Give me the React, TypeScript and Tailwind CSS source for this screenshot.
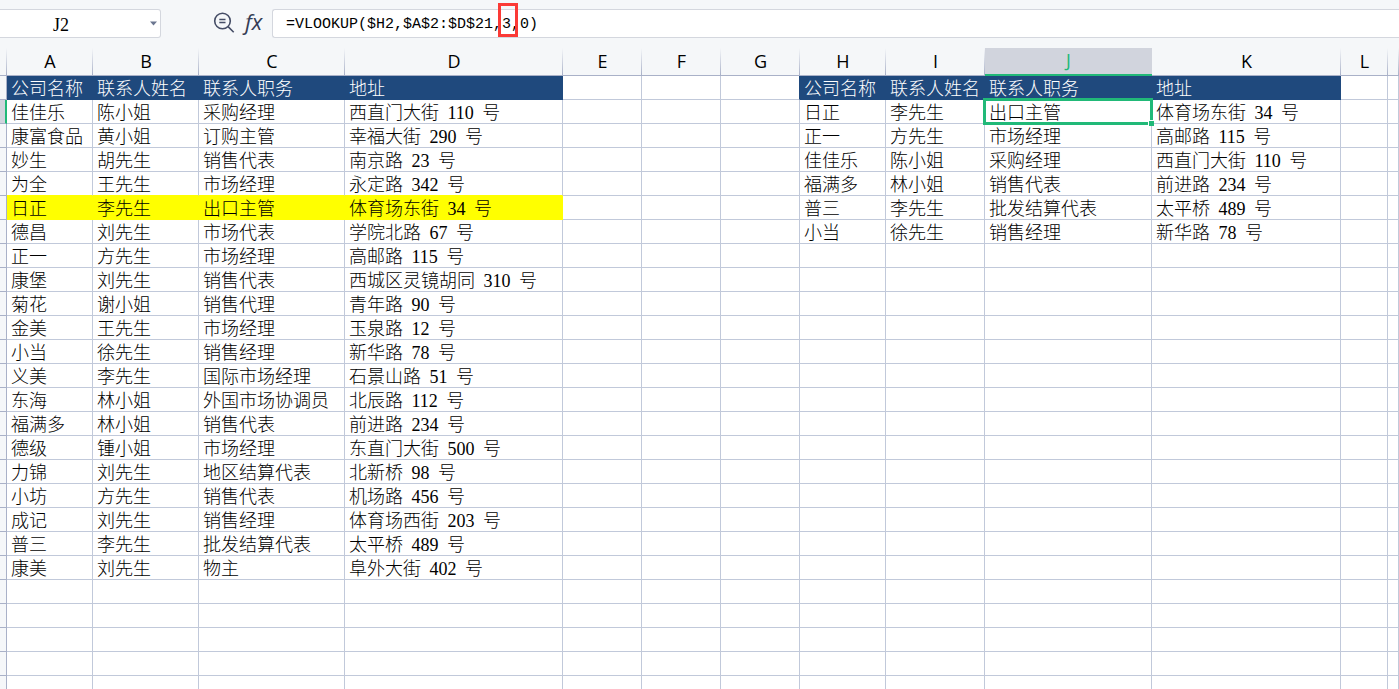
import { useState } from "react"

type Column = {
    name: string
    width: string
}

const columns: Column[] = [
    { name: "A", width: "w-[86px]" },
    { name: "B", width: "w-[106px]" },
    { name: "C", width: "w-[146px]" },
    { name: "D", width: "w-[218px]" },
    { name: "E", width: "w-[79px]" },
    { name: "F", width: "w-[79px]" },
    { name: "G", width: "w-[79px]" },
    { name: "H", width: "w-[86px]" },
    { name: "I", width: "w-[99px]" },
    { name: "J", width: "w-[167px]" },
    { name: "K", width: "w-[189px]" },
    { name: "L", width: "w-[47px]" },
    { name: "", width: "" },
]

const titles = ["公司名称", "联系人姓名", "联系人职务", "地址"]

const contacts = [
    ["佳佳乐", "陈小姐", "采购经理", "西直门大街 110 号"],
    ["康富食品", "黄小姐", "订购主管", "幸福大街 290 号"],
    ["妙生", "胡先生", "销售代表", "南京路 23 号"],
    ["为全", "王先生", "市场经理", "永定路 342 号"],
    ["日正", "李先生", "出口主管", "体育场东街 34 号"],
    ["德昌", "刘先生", "市场代表", "学院北路 67 号"],
    ["正一", "方先生", "市场经理", "高邮路 115 号"],
    ["康堡", "刘先生", "销售代表", "西城区灵镜胡同 310 号"],
    ["菊花", "谢小姐", "销售代理", "青年路 90 号"],
    ["金美", "王先生", "市场经理", "玉泉路 12 号"],
    ["小当", "徐先生", "销售经理", "新华路 78 号"],
    ["义美", "李先生", "国际市场经理", "石景山路 51 号"],
    ["东海", "林小姐", "外国市场协调员", "北辰路 112 号"],
    ["福满多", "林小姐", "销售代表", "前进路 234 号"],
    ["德级", "锺小姐", "市场经理", "东直门大街 500 号"],
    ["力锦", "刘先生", "地区结算代表", "北新桥 98 号"],
    ["小坊", "方先生", "销售代表", "机场路 456 号"],
    ["成记", "刘先生", "销售经理", "体育场西街 203 号"],
    ["普三", "李先生", "批发结算代表", "太平桥 489 号"],
    ["康美", "刘先生", "物主", "阜外大街 402 号"],
]

const lookups = ["日正", "正一", "佳佳乐", "福满多", "普三", "小当"]

const ROWS = 26
const HIGHLIGHT_ROW = 6

const getValue = (row: number, col: number) => {
    if (col < 4) {
        return row === 1 ? titles[col] : contacts[row - 2]?.[col] ?? ""
    }
    if (col >= 7 && col <= 10) {
        if (row === 1) return titles[col - 7]
        const found = contacts.find((c) => c[0] === lookups[row - 2])
        return found ? found[col - 7] : ""
    }
    return ""
}

const isTitle = (row: number, col: number) => row === 1 && (col < 4 || (col >= 7 && col <= 10))
const isYellow = (row: number, col: number) => row === HIGHLIGHT_ROW && col < 4

const getCellStyle = (row: number, col: number) => {
    if (isTitle(row, col)) return "bg-[#1f497d] border-[#1f497d] text-white"
    if (isYellow(row, col)) return "bg-[#ffff00] border-[#ffff00]"
    // the fill of a cell also covers the grid line before it
    const right = isTitle(row, col + 1) ? "border-r-[#1f497d]" : "border-r-[#c1c9da]"
    const bottom = isYellow(row + 1, col) ? "border-b-[#ffff00]" : "border-b-[#c1c9da]"
    return `bg-white ${right} ${bottom}`
}

// house numbers get some extra room on both sides
function CellText({ value }: { value: string }) {
    return (
        <>
            {value.split(/(\d+)/).map((part, i) =>
                /\d/.test(part) ? <span key={i} className="mx-1 font-normal">{part}</span> : part
            )}
        </>
    )
}

function FormulaBar() {
    const [cell, setCell] = useState("J2")
    const [formula, setFormula] = useState("=VLOOKUP($H2,$A$2:$D$21,3,0)")

    return (
        <div className="flex h-12 shrink-0 items-start pt-[9px]">
            <div className="flex h-[29px] w-[161px] items-center rounded-r-[3px] border border-l-0 border-[#d4d7de] bg-white">
                <input
                    aria-label="名称框"
                    value={cell}
                    onChange={(e) => setCell(e.target.value)}
                    className="w-[122px] pt-0.5 text-center font-['Liberation_Serif',serif] text-[18px] leading-6 text-black outline-none"
                />
                <button type="button" aria-label="展开名称" className="ml-auto flex h-full w-3 items-center">
                    <svg width="8" height="5" viewBox="0 0 8 5" className="ml-0.5 fill-[#6b7690]">
                        <path d="M0 0.5h7L3.5 4.5z" />
                    </svg>
                </button>
            </div>
            <div className="ml-[52px] flex w-[59px]">
                <button type="button" aria-label="查找" className="flex h-7 w-6 items-center">
                    <svg width="24" height="24" viewBox="0 0 24 24" fill="none" stroke="#454d66" strokeWidth="1.6">
                        <circle cx="9.5" cy="10" r="7.8" />
                        <path d="M15.1 15.6l5.6 5.6M6.3 8.5h6.2M6.3 11.5h6.2" />
                    </svg>
                </button>
                <button type="button" aria-label="插入函数" className="ml-2 h-6 font-['Open_Sans',sans-serif] text-[22px] leading-6 font-normal text-[#343c55] italic">fx</button>
            </div>
            <div className="relative flex h-[29px] flex-1 items-center rounded-l-[3px] border border-r-0 border-[#d4d7de] bg-white">
                <input
                    aria-label="编辑栏"
                    value={formula}
                    onChange={(e) => setFormula(e.target.value)}
                    className="w-full pt-0.5 pl-[13px] font-['Liberation_Mono',monospace] text-[15px] leading-6 text-black outline-none"
                />
                <span className="pointer-events-none absolute -top-[7px] left-[225px] h-[34px] w-5 border-3 border-[#fb3a36]"></span>
            </div>
        </div>
    )
}

export default function App() {
    return (
        <main className="flex h-screen flex-col overflow-hidden bg-[#f5f7f9] text-black">
            <FormulaBar />
            <div className="flex-1 overflow-hidden">
                <table className="w-full table-fixed border-separate border-spacing-0">
                    <colgroup>
                        <col className="w-[7px]" />
                        {columns.map((c, i) => (
                            <col key={i} className={c.width} />
                        ))}
                    </colgroup>
                    <thead>
                        <tr className="h-7">
                            <th aria-label="全选" className="border-b border-[#a9b1c8] bg-[linear-gradient(to_bottom,#f5f7f9,#a9b1c8)] bg-[length:1px_100%] bg-right bg-no-repeat p-0"></th>
                            {columns.map((c, i) => (
                                <th
                                    key={i}
                                    scope="col"
                                    className={`px-0 pt-0 pb-0.5 font-['Open_Sans',sans-serif] text-[18px] leading-6 font-normal ${
                                        c.name === "J"
                                            ? "border-b-2 border-[#21b978] bg-[#d1d4dd] text-[#21b978]"
                                            : "border-b border-[#a9b1c8] bg-[linear-gradient(to_bottom,#f5f7f9,#a9b1c8)] bg-[length:1px_100%] bg-right bg-no-repeat"
                                    }`}
                                >
                                    {c.name}
                                </th>
                            ))}
                        </tr>
                    </thead>
                    <tbody>
                        {Array.from({ length: ROWS }, (_, r) => r + 1).map((row) => (
                            <tr key={row} className="h-6">
                                <th
                                    scope="row"
                                    aria-label={`${row}`}
                                    className={`border-b border-b-[#a9b1c8] p-0 ${row === 2 ? "border-r-2 border-r-[#21b978] bg-[#d1d4dd]" : "border-r border-r-[#a9b1c8]"}`}
                                ></th>
                                {columns.map((c, col) => (
                                    <td
                                        key={col}
                                        className={`relative border-r border-b pt-0.5 pr-0 pb-0 pl-1 font-['Liberation_Serif','Noto_Sans_CJK_SC',sans-serif] text-[18px] leading-5 font-light whitespace-nowrap ${getCellStyle(row, col)} ${row === 2 && c.name === "J" ? "z-10" : ""}`}
                                    >
                                        <CellText value={getValue(row, col)} />
                                        {row === 2 && c.name === "J" && (
                                            <>
                                                <span className="absolute -inset-0.5 border-3 border-[#21b978]"></span>
                                                <span className="absolute -right-[3px] -bottom-[3px] size-1.5 border-t border-l border-white bg-[#21b978]"></span>
                                            </>
                                        )}
                                    </td>
                                ))}
                            </tr>
                        ))}
                    </tbody>
                </table>
            </div>
        </main>
    )
}
